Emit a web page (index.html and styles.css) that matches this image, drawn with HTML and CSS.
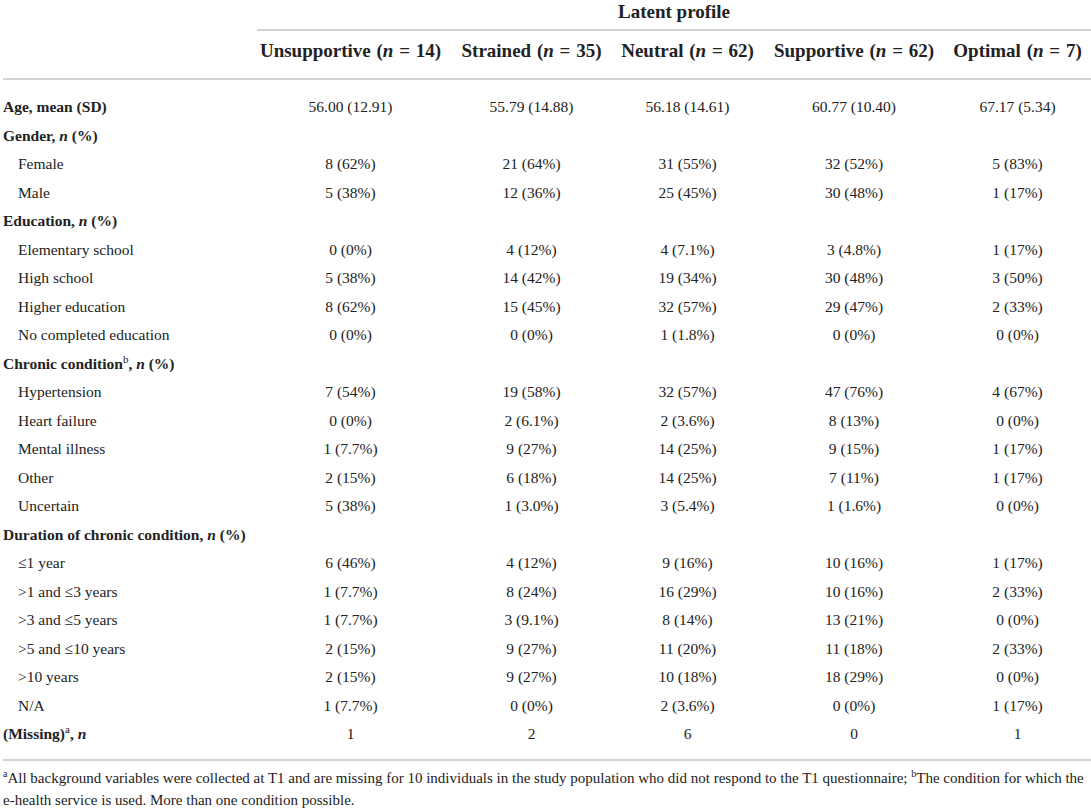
FILE: index.html
```html
<!DOCTYPE html>
<html>
<head>
  <meta charset="utf-8">
  <link rel="stylesheet" href="styles.css">
</head>
<body>
<div class="table-wrap">
  <table class="profile-table">
    <colgroup>
      <col class="col-label">
      <col class="col-a">
      <col class="col-b">
      <col class="col-c">
      <col class="col-d">
      <col class="col-e">
    </colgroup>
    <thead>
      <tr class="group-row">
        <th></th>
        <th colspan="5"><div class="group-title">Latent profile</div></th>
      </tr>
      <tr class="head-row">
        <th></th>
        <th>Unsupportive (<i>n</i> = 14)</th>
        <th>Strained (<i>n</i> = 35)</th>
        <th>Neutral (<i>n</i> = 62)</th>
        <th>Supportive (<i>n</i> = 62)</th>
        <th>Optimal (<i>n</i> = 7)</th>
      </tr>
    </thead>
    <tbody>
      <tr class="first">
        <td class="section">Age, mean (SD)</td>
        <td>56.00 (12.91)</td><td>55.79 (14.88)</td><td>56.18 (14.61)</td><td>60.77 (10.40)</td><td>67.17 (5.34)</td>
      </tr>
      <tr>
        <td class="section">Gender, <i>n</i> (%)</td>
        <td></td><td></td><td></td><td></td><td></td>
      </tr>
      <tr>
        <td class="sub">Female</td>
        <td>8 (62%)</td><td>21 (64%)</td><td>31 (55%)</td><td>32 (52%)</td><td>5 (83%)</td>
      </tr>
      <tr>
        <td class="sub">Male</td>
        <td>5 (38%)</td><td>12 (36%)</td><td>25 (45%)</td><td>30 (48%)</td><td>1 (17%)</td>
      </tr>
      <tr>
        <td class="section">Education, <i>n</i> (%)</td>
        <td></td><td></td><td></td><td></td><td></td>
      </tr>
      <tr>
        <td class="sub">Elementary school</td>
        <td>0 (0%)</td><td>4 (12%)</td><td>4 (7.1%)</td><td>3 (4.8%)</td><td>1 (17%)</td>
      </tr>
      <tr>
        <td class="sub">High school</td>
        <td>5 (38%)</td><td>14 (42%)</td><td>19 (34%)</td><td>30 (48%)</td><td>3 (50%)</td>
      </tr>
      <tr>
        <td class="sub">Higher education</td>
        <td>8 (62%)</td><td>15 (45%)</td><td>32 (57%)</td><td>29 (47%)</td><td>2 (33%)</td>
      </tr>
      <tr>
        <td class="sub">No completed education</td>
        <td>0 (0%)</td><td>0 (0%)</td><td>1 (1.8%)</td><td>0 (0%)</td><td>0 (0%)</td>
      </tr>
      <tr>
        <td class="section">Chronic condition<sup>b</sup>, <i>n</i> (%)</td>
        <td></td><td></td><td></td><td></td><td></td>
      </tr>
      <tr>
        <td class="sub">Hypertension</td>
        <td>7 (54%)</td><td>19 (58%)</td><td>32 (57%)</td><td>47 (76%)</td><td>4 (67%)</td>
      </tr>
      <tr>
        <td class="sub">Heart failure</td>
        <td>0 (0%)</td><td>2 (6.1%)</td><td>2 (3.6%)</td><td>8 (13%)</td><td>0 (0%)</td>
      </tr>
      <tr>
        <td class="sub">Mental illness</td>
        <td>1 (7.7%)</td><td>9 (27%)</td><td>14 (25%)</td><td>9 (15%)</td><td>1 (17%)</td>
      </tr>
      <tr>
        <td class="sub">Other</td>
        <td>2 (15%)</td><td>6 (18%)</td><td>14 (25%)</td><td>7 (11%)</td><td>1 (17%)</td>
      </tr>
      <tr>
        <td class="sub">Uncertain</td>
        <td>5 (38%)</td><td>1 (3.0%)</td><td>3 (5.4%)</td><td>1 (1.6%)</td><td>0 (0%)</td>
      </tr>
      <tr>
        <td class="section">Duration of chronic condition, <i>n</i> (%)</td>
        <td></td><td></td><td></td><td></td><td></td>
      </tr>
      <tr>
        <td class="sub">&le;1 year</td>
        <td>6 (46%)</td><td>4 (12%)</td><td>9 (16%)</td><td>10 (16%)</td><td>1 (17%)</td>
      </tr>
      <tr>
        <td class="sub">&gt;1 and &le;3 years</td>
        <td>1 (7.7%)</td><td>8 (24%)</td><td>16 (29%)</td><td>10 (16%)</td><td>2 (33%)</td>
      </tr>
      <tr>
        <td class="sub">&gt;3 and &le;5 years</td>
        <td>1 (7.7%)</td><td>3 (9.1%)</td><td>8 (14%)</td><td>13 (21%)</td><td>0 (0%)</td>
      </tr>
      <tr>
        <td class="sub">&gt;5 and &le;10 years</td>
        <td>2 (15%)</td><td>9 (27%)</td><td>11 (20%)</td><td>11 (18%)</td><td>2 (33%)</td>
      </tr>
      <tr>
        <td class="sub">&gt;10 years</td>
        <td>2 (15%)</td><td>9 (27%)</td><td>10 (18%)</td><td>18 (29%)</td><td>0 (0%)</td>
      </tr>
      <tr>
        <td class="sub">N/A</td>
        <td>1 (7.7%)</td><td>0 (0%)</td><td>2 (3.6%)</td><td>0 (0%)</td><td>1 (17%)</td>
      </tr>
      <tr class="last">
        <td class="section">(Missing)<sup>a</sup>, <i>n</i></td>
        <td>1</td><td>2</td><td>6</td><td>0</td><td>1</td>
      </tr>
    </tbody>
  </table>

  <p class="table-foot"><sup>a</sup>All background variables were collected at T1 and are missing for 10 individuals in the study population who did not respond to the T1 questionnaire; <sup>b</sup>The condition for which the<br>e-health service is used. More than one condition possible.</p>
</div>
</body>
</html>
```

FILE: styles.css
```css
body {
  margin: 0;
  background-color: #fff;
  color: #222;
  font-family: "Liberation Serif", "Times New Roman", serif;
}

.table-wrap {
  padding-left: 3px;
  width: 1088px;
}

.profile-table {
  width: 1088px;
  border-collapse: collapse;
  table-layout: fixed;
}

.col-label { width: 246px; }
.col-a { width: 203px; }
.col-b { width: 159px; }
.col-c { width: 153px; }
.col-d { width: 180px; }
.col-e { width: 147px; }

.profile-table th {
  font-weight: bold;
  font-size: 19px;
  text-align: center;
  padding: 0;
  white-space: nowrap;
}

.profile-table i {
  font-style: italic;
}

.head-row .eq {
  padding: 0 2px;
}

/* fila "Latent profile" */
.group-row th {
  height: 30px;
  vertical-align: top;
}

.group-title {
  margin-left: 8px;
  line-height: 24px;
  height: 29px;
  border-bottom: 2px solid #d3d3d3;
}

.head-row th {
  line-height: 24px;
  padding-top: 8px;
  padding-bottom: 15px;
  border-bottom: 2px solid #d3d3d3;
  word-spacing: 1px;
}

.profile-table td {
  font-size: 15.5px;
  line-height: 20px;
  height: 28.5px;
  padding: 0;
  text-align: center;
  white-space: nowrap;
}

.profile-table td.section {
  text-align: left;
  font-weight: bold;
}

.profile-table td.sub {
  text-align: left;
  padding-left: 15px;
}

.profile-table sup {
  font-size: 11px;
  line-height: 0;
  font-weight: normal;
}

.profile-table tr.first td {
  padding-top: 13px;
}

.profile-table tr.last td {
  padding-bottom: 10px;
  border-bottom: 2px solid #d3d3d3;
}

.table-foot {
  margin: 6px 0 0 0;
  font-size: 15px;
  line-height: 22px;
  white-space: nowrap;
}

.table-foot sup {
  font-size: 10px;
  line-height: 0;
}
```
